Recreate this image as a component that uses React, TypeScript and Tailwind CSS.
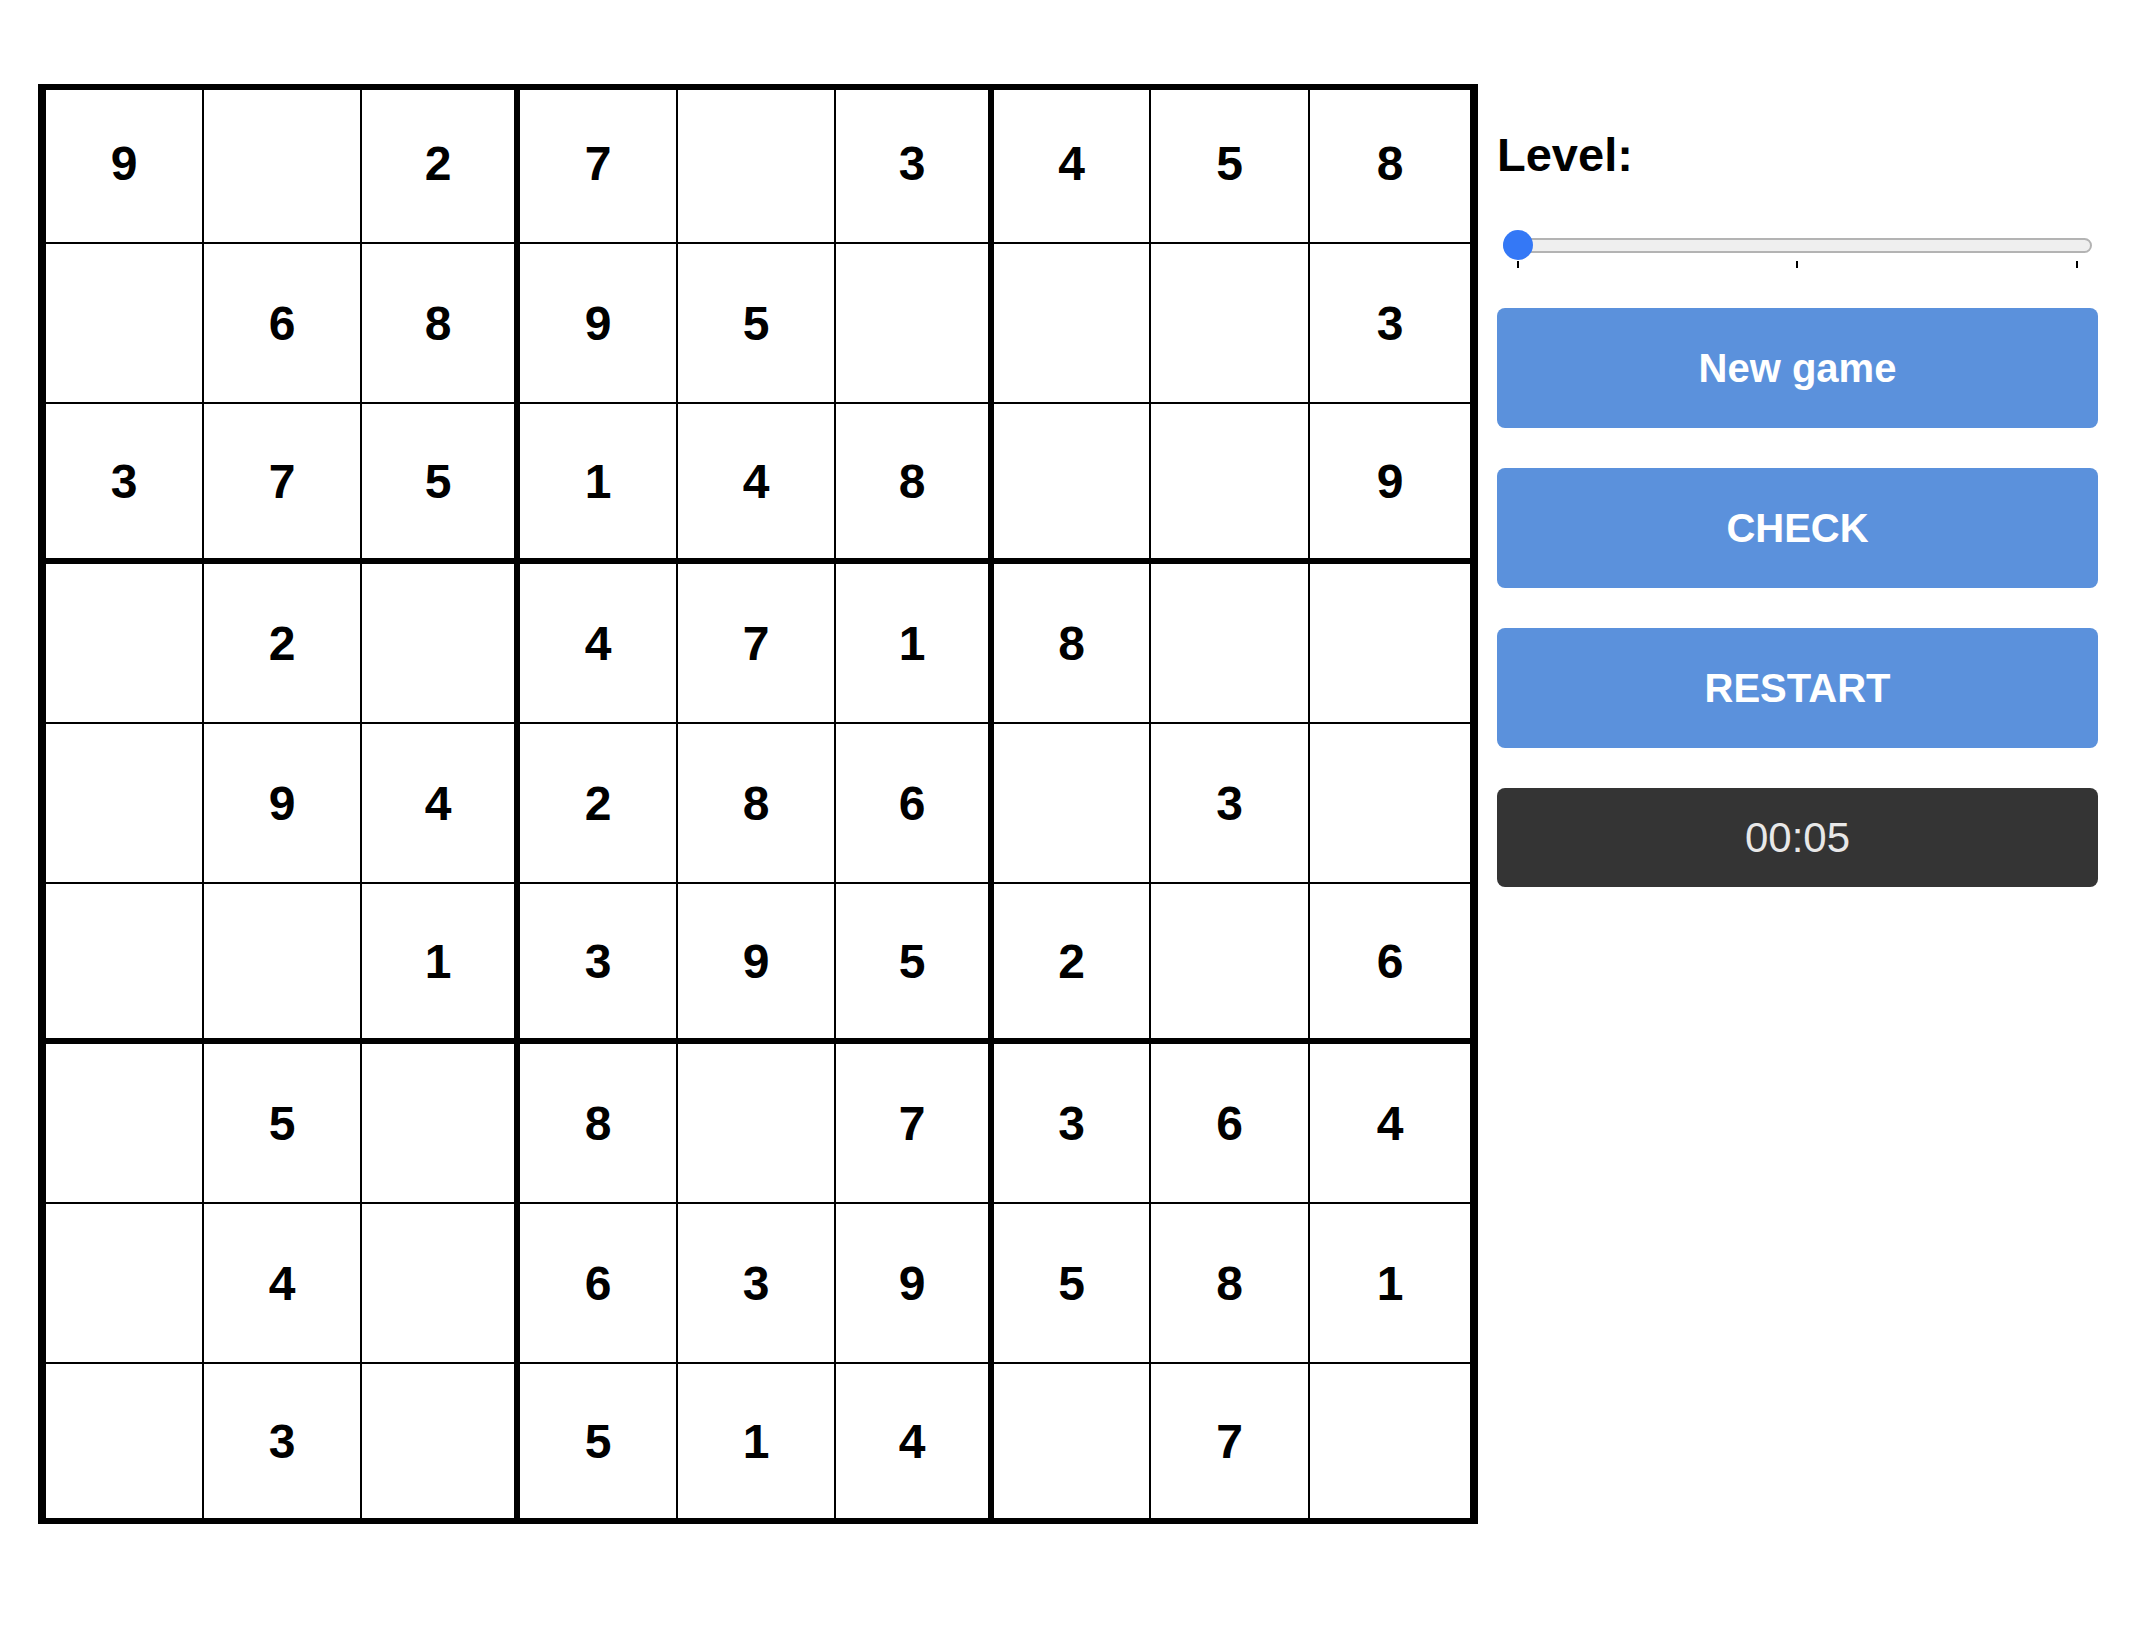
import React from "react";

const grid: (number | null)[][] = [
  [9, null, 2, 7, null, 3, 4, 5, 8],
  [null, 6, 8, 9, 5, null, null, null, 3],
  [3, 7, 5, 1, 4, 8, null, null, 9],
  [null, 2, null, 4, 7, 1, 8, null, null],
  [null, 9, 4, 2, 8, 6, null, 3, null],
  [null, null, 1, 3, 9, 5, 2, null, 6],
  [null, 5, null, 8, null, 7, 3, 6, 4],
  [null, 4, null, 6, 3, 9, 5, 8, 1],
  [null, 3, null, 5, 1, 4, null, 7, null],
];

const colClasses = [
  "grid-cols-[156px_156px_152px]",
  "grid-cols-[156px_156px_152px]",
  "grid-cols-[155px_157px_160px]",
];
const rowClasses = [
  "grid-rows-[152px_158px_154px]",
  "grid-rows-[158px_158px_154px]",
  "grid-rows-[158px_158px_154px]",
];

function Box({ br, bc }: { br: number; bc: number }) {
  const cells: React.ReactNode[] = [];
  for (let r = 0; r < 3; r++) {
    for (let c = 0; c < 3; c++) {
      const v = grid[br * 3 + r][bc * 3 + c];
      const first = br === 0 && r === 0;
      cells.push(
        <div
          key={`${r}-${c}`}
          className={`bg-white flex items-center justify-center text-[48px] leading-none font-bold text-black ${
            first ? "pb-[5px]" : "pt-[2px]"
          }`}
        >
          {v ?? ""}
        </div>
      );
    }
  }
  return (
    <div className={`grid gap-[2px] bg-black ${colClasses[bc]} ${rowClasses[br]}`}>
      {cells}
    </div>
  );
}

export default function App() {
  const boxes: React.ReactNode[] = [];
  for (let br = 0; br < 3; br++) {
    for (let bc = 0; bc < 3; bc++) {
      boxes.push(<Box key={`${br}-${bc}`} br={br} bc={bc} />);
    }
  }
  return (
    <div
      className="min-h-[1644px] w-full bg-white flex items-start pl-[38px] pt-[84px] gap-[19px]"
      style={{ fontFamily: '"Liberation Sans", Arial, Helvetica, sans-serif' }}
    >
      <div className="bg-black px-[8px] py-[6px] grid grid-cols-[468px_468px_476px] grid-rows-[468px_474px_474px] gap-[6px] shrink-0">
        {boxes}
      </div>

      <div className="w-[601px] flex flex-col mt-[47px]">
        <div className="h-[47px] text-[47px] leading-none font-bold text-black">Level:</div>

        <div className="relative h-[38px] mt-[52px]">
          <div className="absolute left-[6px] right-[6px] top-[8px] h-[15px] rounded-full bg-[#efefef] border-2 border-[#b3b3b3]" />
          <div className="absolute left-[6px] top-0 w-[30px] h-[30px] rounded-full bg-[#3478f6]" />
          <div className="absolute left-[20px] top-[31px] w-[2px] h-[7px] bg-black" />
          <div className="absolute left-[299px] top-[31px] w-[2px] h-[7px] bg-black" />
          <div className="absolute left-[579px] top-[31px] w-[2px] h-[7px] bg-black" />
        </div>

        <div className="flex flex-col gap-[40px] mt-[40px]">
          <button className="h-[120px] w-full rounded-[8px] bg-[#5b91dc] text-white text-[40px] font-bold leading-none flex items-center justify-center">
            New game
          </button>
          <button className="h-[120px] w-full rounded-[8px] bg-[#5b91dc] text-white text-[40px] font-bold leading-none flex items-center justify-center">
            CHECK
          </button>
          <button className="h-[120px] w-full rounded-[8px] bg-[#5b91dc] text-white text-[40px] font-bold leading-none flex items-center justify-center">
            RESTART
          </button>
          <div className="h-[99px] w-full rounded-[8px] bg-[#343434] text-[#e8e8e8] text-[42px] font-normal leading-none flex items-center justify-center">
            00:05
          </div>
        </div>
      </div>
    </div>
  );
}
